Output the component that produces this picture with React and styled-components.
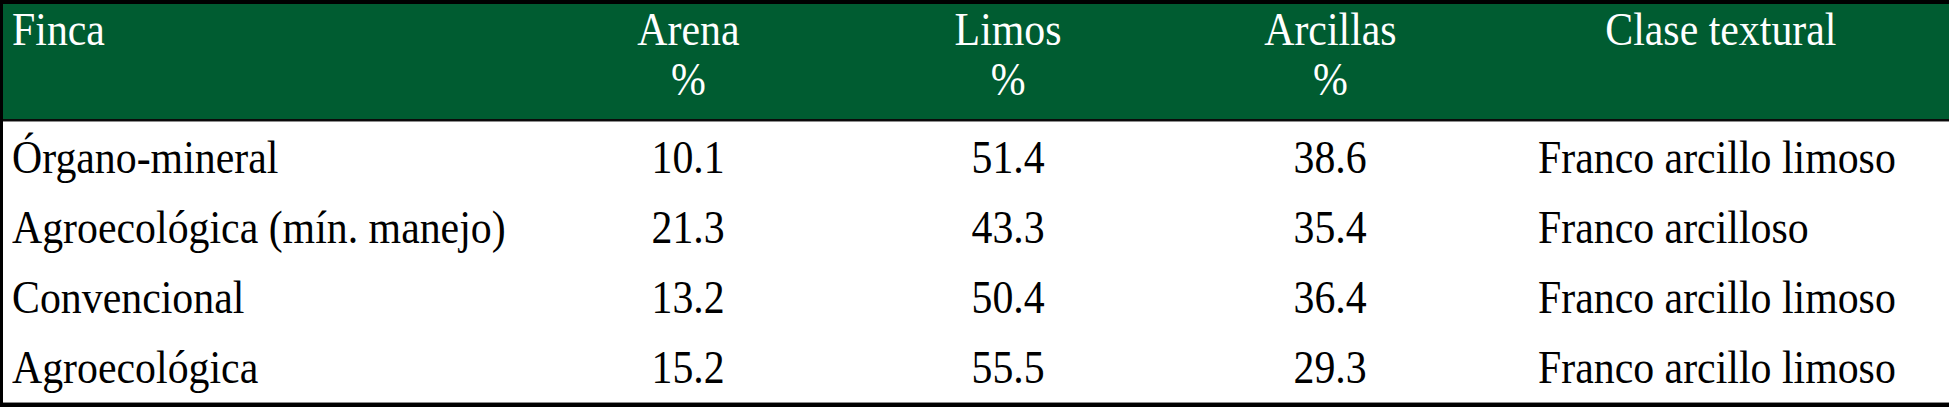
import React from "react";
import styled, { createGlobalStyle } from "styled-components";

const GlobalStyle = createGlobalStyle`
  html, body {
    margin: 0;
    padding: 0;
    background: #fff;
  }
  body {
    font-family: "Liberation Serif", "Times New Roman", serif;
  }
`;

const COLUMNS = "525px 320px 320px 324px 1fr";

const rows = [
  { finca: "Órgano-mineral", arena: "10.1", limos: "51.4", arcillas: "38.6", clase: "Franco arcillo limoso" },
  { finca: "Agroecológica (mín. manejo)", arena: "21.3", limos: "43.3", arcillas: "35.4", clase: "Franco arcilloso" },
  { finca: "Convencional", arena: "13.2", limos: "50.4", arcillas: "36.4", clase: "Franco arcillo limoso" },
  { finca: "Agroecológica", arena: "15.2", limos: "55.5", arcillas: "29.3", clase: "Franco arcillo limoso" },
];

const Table = styled.div`
  width: 1949px;
  box-sizing: border-box;
  border-top: 4px solid #000;
  border-left: 3px solid #000;
  border-bottom: 4px solid #000;
  font-family: "Liberation Serif", "Times New Roman", serif;
  font-size: 47px;
  line-height: 50px;
`;

const HeaderRow = styled.div`
  display: grid;
  grid-template-columns: ${COLUMNS};
  height: 117px;
  box-sizing: border-box;
  background: #005c31;
  color: #fff;
  border-bottom: 2px solid #0b0b0b;
`;

const HeadCell = styled.div`
  padding: 0 0 0 ${(p) => (p.$align === "left" ? "9px" : "0")};
  text-align: ${(p) => p.$align || "center"};
  white-space: nowrap;
`;

const Body = styled.div`
  border-top: 1px solid #8c8c8c;
  border-bottom: 1px solid #8c8c8c;
  color: #000;
`;

const Row = styled.div`
  display: grid;
  grid-template-columns: ${COLUMNS};
  height: 70px;
  box-sizing: border-box;
  padding-top: 10px;
`;

const Cell = styled.div`
  padding-left: ${(p) => p.$inset || 0}px;
  text-align: ${(p) => p.$align || "center"};
  white-space: nowrap;
`;

/* the source type is set narrow: tall glyphs, squeezed sideways */
const Text = styled.span`
  display: inline-block;
  transform: scaleX(0.89);
  transform-origin: ${(p) => (p.$align === "left" ? "left" : "center")} top;
`;

export default function App() {
  return (
    <>
      <GlobalStyle />
      <Table>
        <HeaderRow>
          <HeadCell $align="left">
            <Text $align="left">Finca</Text>
          </HeadCell>
          <HeadCell>
            <Text>
              Arena
              <br />%
            </Text>
          </HeadCell>
          <HeadCell>
            <Text>
              Limos
              <br />%
            </Text>
          </HeadCell>
          <HeadCell>
            <Text>
              Arcillas
              <br />%
            </Text>
          </HeadCell>
          <HeadCell>
            <Text>Clase textural</Text>
          </HeadCell>
        </HeaderRow>
        <Body>
          {rows.map((r) => (
            <Row key={r.finca}>
              <Cell $align="left" $inset={9}>
                <Text $align="left">{r.finca}</Text>
              </Cell>
              <Cell>
                <Text>{r.arena}</Text>
              </Cell>
              <Cell>
                <Text>{r.limos}</Text>
              </Cell>
              <Cell>
                <Text>{r.arcillas}</Text>
              </Cell>
              <Cell $align="left" $inset={46}>
                <Text $align="left">{r.clase}</Text>
              </Cell>
            </Row>
          ))}
        </Body>
      </Table>
    </>
  );
}
